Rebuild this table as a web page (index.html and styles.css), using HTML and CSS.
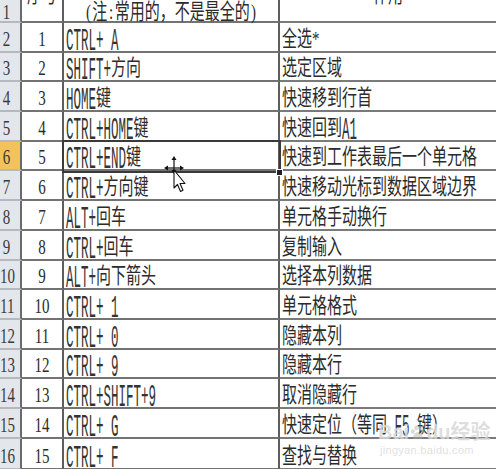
FILE: index.html
```html
<!DOCTYPE html>
<html lang="zh">
<head>
<meta charset="utf-8">
<title>Excel 快捷键</title>
<link rel="stylesheet" href="styles.css">
</head>
<body>
<div class="sheet">
  <div class="h top"><span class="t">1</span></div>
  <div class="a top cut"><span class="t">序号</span></div>
  <div class="b top mid"><span class="t"><span class="p">(</span>注<span class="p">:</span>常用的，不是最全的<span class="p">)</span></span></div>
  <div class="c top cut mid"><span class="t">作用</span></div>

  <div class="h"><span class="t">2</span></div>
  <div class="a"><span class="t">1</span></div>
  <div class="b"><span class="t"><span class="l">CTRL+ A</span></span></div>
  <div class="c"><span class="t">全选*</span></div>

  <div class="h"><span class="t">3</span></div>
  <div class="a"><span class="t">2</span></div>
  <div class="b"><span class="t"><span class="l">SHIFT+</span>方向</span></div>
  <div class="c"><span class="t">选定区域</span></div>

  <div class="h"><span class="t">4</span></div>
  <div class="a"><span class="t">3</span></div>
  <div class="b"><span class="t"><span class="l">HOME</span>键</span></div>
  <div class="c"><span class="t">快速移到行首</span></div>

  <div class="h"><span class="t">5</span></div>
  <div class="a"><span class="t">4</span></div>
  <div class="b"><span class="t"><span class="l">CTRL+HOME</span>键</span></div>
  <div class="c"><span class="t">快速回到<span class="l">A1</span></span></div>

  <div class="h hl"><span class="t">6</span></div>
  <div class="a"><span class="t">5</span></div>
  <div class="b"><span class="t"><span class="l">CTRL+END</span>键</span></div>
  <div class="c"><span class="t">快速到工作表最后一个单元格</span></div>

  <div class="h"><span class="t">7</span></div>
  <div class="a"><span class="t">6</span></div>
  <div class="b"><span class="t"><span class="l">CTRL+</span>方向键</span></div>
  <div class="c"><span class="t">快速移动光标到数据区域边界</span></div>

  <div class="h"><span class="t">8</span></div>
  <div class="a"><span class="t">7</span></div>
  <div class="b"><span class="t"><span class="l">ALT+</span>回车</span></div>
  <div class="c"><span class="t">单元格手动换行</span></div>

  <div class="h"><span class="t">9</span></div>
  <div class="a"><span class="t">8</span></div>
  <div class="b"><span class="t"><span class="l">CTRL+</span>回车</span></div>
  <div class="c"><span class="t">复制输入</span></div>

  <div class="h"><span class="t">10</span></div>
  <div class="a"><span class="t">9</span></div>
  <div class="b"><span class="t"><span class="l">ALT+</span>向下箭头</span></div>
  <div class="c"><span class="t">选择本列数据</span></div>

  <div class="h"><span class="t">11</span></div>
  <div class="a"><span class="t">10</span></div>
  <div class="b"><span class="t"><span class="l">CTRL+ 1</span></span></div>
  <div class="c"><span class="t">单元格格式</span></div>

  <div class="h"><span class="t">12</span></div>
  <div class="a"><span class="t">11</span></div>
  <div class="b"><span class="t"><span class="l">CTRL+ 0</span></span></div>
  <div class="c"><span class="t">隐藏本列</span></div>

  <div class="h"><span class="t">13</span></div>
  <div class="a"><span class="t">12</span></div>
  <div class="b"><span class="t"><span class="l">CTRL+ 9</span></span></div>
  <div class="c"><span class="t">隐藏本行</span></div>

  <div class="h"><span class="t">14</span></div>
  <div class="a"><span class="t">13</span></div>
  <div class="b"><span class="t"><span class="l">CTRL+SHIFT+9</span></span></div>
  <div class="c"><span class="t">取消隐藏行</span></div>

  <div class="h"><span class="t">15</span></div>
  <div class="a"><span class="t">14</span></div>
  <div class="b"><span class="t"><span class="l">CTRL+ G</span></span></div>
  <div class="c"><span class="t">快速定位（等同<span class="l"> F5 </span>键）</span></div>

  <div class="h"><span class="t">16</span></div>
  <div class="a"><span class="t">15</span></div>
  <div class="b"><span class="t"><span class="l">CTRL+ F</span></span></div>
  <div class="c"><span class="t">查找与替换</span></div>

  <div class="sel"></div>
  <div class="handle"></div>

  <svg class="cursor" width="26" height="40" viewBox="0 0 26 40">
    <g fill="#111" stroke="none">
      <rect x="10.4" y="4" width="1.2" height="14"/>
      <rect x="4" y="12.4" width="14" height="1.2"/>
      <polygon points="11,1 8.5,5 13.5,5"/>
      <polygon points="11,19 8.5,15 13.5,15"/>
      <polygon points="1,13 5,10.5 5,15.5"/>
      <polygon points="21,13 17,10.5 17,15.5"/>
    </g>
    <polygon points="11,15 11,33 14.5,29.5 17.5,36.5 20,35.3 17,28.5 22,28.5" fill="#fff" stroke="#111" stroke-width="1.1" stroke-linejoin="round"/>
  </svg>

  <div class="wm">
    <div class="wm-big">Bai<svg class="paw" width="15" height="15" viewBox="0 0 16 16"><g fill="rgba(170,170,170,0.45)"><ellipse cx="3" cy="7" rx="2" ry="2.6"/><ellipse cx="6.5" cy="3.2" rx="2" ry="2.6"/><ellipse cx="10.5" cy="3.2" rx="2" ry="2.6"/><ellipse cx="13.6" cy="7" rx="2" ry="2.6"/><path d="M8.3 7.5c-2.6 0-5 3.6-5 5.6 0 1.7 1.6 2.2 2.8 2 1-.2 1.5-.6 2.2-.6s1.2.4 2.2.6c1.2.2 2.8-.3 2.8-2 0-2-2.4-5.6-5-5.6z"/></g></svg>du经验</div>
    <div class="wm-small">jingyan.baidu.com</div>
  </div>
</div>
</body>
</html>
```

FILE: styles.css
```css
html, body {
  margin: 0;
  padding: 0;
  background: #ffffff;
}

.sheet {
  position: relative;
  width: 496px;
  height: 469px;
  overflow: hidden;
  display: grid;
  grid-template-columns: 22px 42px 216px 216px;
  grid-template-rows: 23px repeat(14, 29.7px) 31px;
  font-family: "Liberation Serif", "Noto Sans CJK SC", serif;
  font-size: 15px;
  color: #2b2b2b;
}

.h, .a, .b, .c {
  box-sizing: border-box;
  display: flex;
  align-items: flex-end;
  padding-bottom: 4px;
}

.h {
  background: #e3e7ec;
  border-right: 2px solid #6a6a6a;
  border-bottom: 2px solid #b4b9bf;
  color: #3a3a3a;
}

.h .t {
  width: 13px;
  text-align: center;
}

.hl {
  background: #f4c25c;
}

.a {
  border-right: 2px solid #5e5e5e;
  border-bottom: 2px solid #737373;
  justify-content: center;
}

.b {
  border-right: 2px solid #5e5e5e;
  border-bottom: 2px solid #737373;
  padding-left: 2px;
}

.c {
  border-bottom: 2px solid #7a7a7a;
  padding-left: 2px;
}

.t {
  display: inline-block;
  line-height: 16px;
  white-space: pre;
  transform: scaleY(1.45);
}

.l {
  display: inline-block;
  font-family: "Liberation Mono", monospace;
  font-size: 12.5px;
  line-height: 10px;
  white-space: pre;
  color: #333;
  transform: translateY(3px) scaleY(1.68);
  transform-origin: 50% 83%;
}

.p {
  display: inline-block;
  width: 7.5px;
  text-align: center;
}

.top {
  padding-bottom: 1px;
}

.mid {
  justify-content: center;
  padding-left: 0;
}

.cut {
  align-items: flex-start;
  padding-bottom: 0;
  overflow: hidden;
}

.cut .t {
  margin-top: -13px;
}

.sel {
  position: absolute;
  left: 62px;
  top: 140px;
  width: 219px;
  height: 33px;
  box-sizing: border-box;
  border: 2px solid #3a3a3a;
}

.handle {
  position: absolute;
  left: 276px;
  top: 169px;
  width: 5px;
  height: 5px;
  background: #222;
  border: 1px solid #fff;
}

.cursor {
  position: absolute;
  left: 163px;
  top: 155px;
}

.wm {
  position: absolute;
  left: 378px;
  top: 420px;
  font-family: "Liberation Sans", "Noto Sans CJK SC", sans-serif;
  color: rgba(175, 175, 175, 0.42);
  text-shadow: 0 0 1px rgba(255, 255, 255, 0.8);
}

.wm-big {
  display: flex;
  align-items: center;
  font-size: 20px;
  font-weight: bold;
  line-height: 24px;
}

.paw {
  margin: 0 1px;
}

.wm-small {
  font-size: 11px;
  line-height: 13px;
  padding-left: 2px;
  letter-spacing: 0.3px;
}
```
